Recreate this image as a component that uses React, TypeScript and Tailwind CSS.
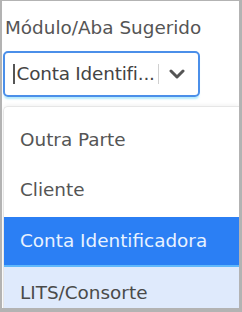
import React from "react";

export default function App() {
  const font = { fontFamily: '"DejaVu Sans", sans-serif' };
  return (
    <div
      className="w-[242px] h-[312px] overflow-hidden bg-white border-t-[1px] border-l-[2px] border-r-[3px] border-b-[4px] border-[#b3b3b3] flex flex-col"
      style={font}
    >
      <div className="mt-[15px] pl-[3px] h-[24px] leading-[24px] text-[18.4px] text-[#555555] whitespace-nowrap">
        Módulo/Aba Sugerido
      </div>
      <div className="mt-[11px] ml-[1px] w-[197px] h-[46px] rounded-[5px] border-[2px] border-[#4b8fe9] flex items-center shadow-[0_3px_2px_-1px_rgba(150,225,250,0.7)]">
        <span className="ml-[8px] w-[1.5px] h-[20px] bg-[#555]" />
        <span className="ml-[2px] text-[18.4px] text-[#444] whitespace-nowrap leading-none tracking-[-0.2px]">
          Conta Identifi...
        </span>
        <span className="ml-[3px] w-[1px] h-[20px] bg-[#d0d0d0]" />
        <svg className="ml-[10px]" width="16" height="10" viewBox="0 0 16 10">
          <path d="M2 2 L8 8 L14 2" fill="none" stroke="#555" strokeWidth="3" strokeLinecap="round" strokeLinejoin="round" />
        </svg>
      </div>
      <div className="mt-[9px] ml-[1px] flex-1 border-t border-l border-[#e6e6e6] rounded-tl-[5px] shadow-[0_-1px_4px_rgba(0,0,0,0.06)] pt-[8px] flex flex-col">
        <div className="h-[50px] flex items-center pl-[16px] text-[18.4px] text-[#555]">Outra Parte</div>
        <div className="h-[50px] flex items-center pl-[16px] text-[18.4px] text-[#555]">Cliente</div>
        <div className="h-[50px] mt-[2px] flex items-center pl-[16px] text-[18.4px] text-[#e8f2ff] bg-[#2b7ff4] border-b-[2px] border-[#5fb8fb]">Conta Identificadora</div>
        <div className="flex-1 flex items-start pt-[12px] pl-[16px] text-[18.4px] text-[#4a4a4a] bg-[#dfeafc]">LITS/Consorte</div>
      </div>
    </div>
  );
}
